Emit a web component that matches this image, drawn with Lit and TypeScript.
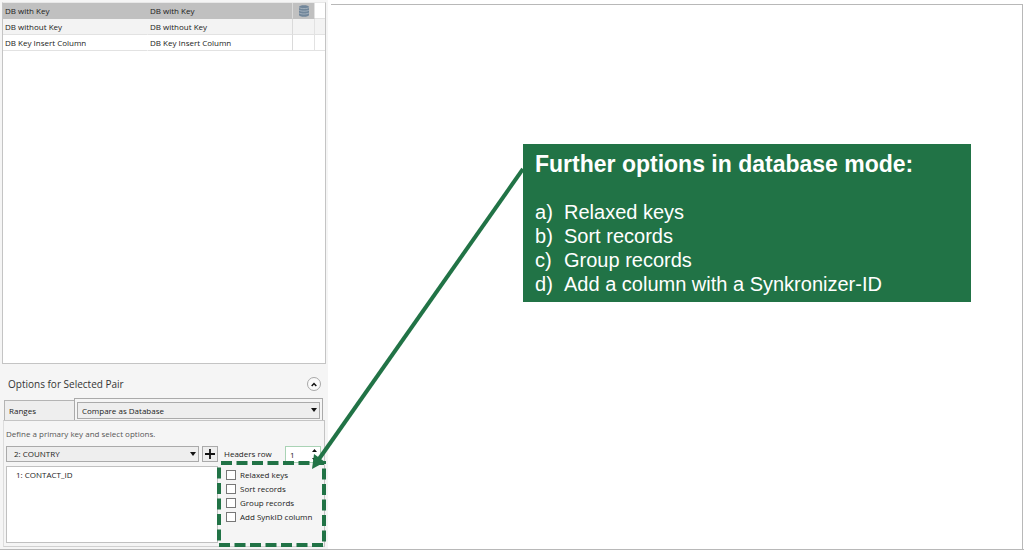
import { LitElement, html, css, svg } from "lit";
import { customElement, state } from "lit/decorators.js";

const caret = svg`<path d="M0 0h6l-3 4z" fill="#111" />`;

@customElement("pair-list")
export class PairList extends LitElement {
  static styles = css`
    :host { display: block; background: #fff; border: 1px solid #c4c4c4; border-top-color: #e8e8e8; box-sizing: border-box; }
    .pairs { width: 100%; table-layout: fixed; border-collapse: separate; border-spacing: 0; }
    .pairs td { height: 16px; box-sizing: border-box; padding: 1px 0 0 2px; line-height: 14px; border-right: 1px solid #e2e2e2; border-bottom: 1px solid #e2e2e2; white-space: nowrap; overflow: hidden; }
    .pairs td.name { border-right-color: transparent; }
    .pairs td.second { border-right-color: #dadada; }
    .pairs tr.alt td { background: #f3f3f3; }
    .pairs tr.selected td { background: #c0c0c0; border-bottom-color: #c0c0c0; }
    .pairs tr.selected td.rest { background: #fff; border-bottom-color: #e2e2e2; }
    .pairs td.rest { border-right: 0; }
    .pairs td.icon { padding: 0; text-align: center; }
    .wide { width: 145px; }
    .mark { width: 22px; }
    .db { display: block; margin: 0 auto; }
  `;
  rows = ["DB with Key", "DB without Key", "DB Key Insert Column"];
  render() {
    return html`<table class="pairs">
      <colgroup><col class="wide" /><col class="wide" /><col class="mark" /><col /></colgroup>
      <tbody>
        ${this.rows.map((r, i) => html`<tr class=${i === 0 ? "selected" : i === 1 ? "alt" : ""}>
          <td class="name">${r}</td><td class="second">${r}</td>
          <td class="icon">${i === 0 ? html`<svg class="db" width="10" height="12" viewBox="0 0 10 12" aria-label="Database">
            <path d="M0 2c0-2.400 10-2.400 10 0v8c0 2.400-10 2.400-10 0z" fill="#71869a" />
            <path d="M0 2.400c1 1.600 9 1.600 10 0M0 5c1 1.600 9 1.600 10 0M0 7.800c1 1.600 9 1.600 10 0" fill="none" stroke="#aebac4" stroke-width=".8" />
          </svg>` : ""}</td><td class="rest"></td>
        </tr>`)}
      </tbody>
    </table>`;
  }
}

@customElement("app-root")
export class AppRoot extends LitElement {
  static styles = css`
    :host { display: grid; grid-template-columns: 328px 1fr; position: relative; min-height: 100vh; box-sizing: border-box; border-bottom: 1px solid #b8b8b8; background: #fff; color: #222; font: 8px/12px "Open Sans", "Noto Sans", sans-serif; overflow: hidden; }
    * { box-sizing: border-box; }
    button, input, select { font: inherit; color: inherit; margin: 0; border-radius: 0; appearance: none; }
    .side { background: #f5f5f5; padding: 2px 2px 0; display: flex; flex-direction: column; }
    pair-list { height: 362px; color: #222; }
    .head { display: flex; align-items: center; justify-content: space-between; height: 34px; padding: 6px 5px 0 6px; }
    .title { margin: 0; font-size: 10px; line-height: 14px; font-weight: 400; color: #333; }
    .collapse { width: 14px; height: 14px; padding: 0; border: 1px solid #a8a8a8; border-radius: 50%; background: #fafafa; display: grid; place-items: center; }
    .tabs { display: flex; align-items: flex-end; padding: 0 3px 0 2px; }
    .tab { width: 70px; height: 20px; padding: 0 0 0 4px; text-align: left; background: #eee; border: 1px solid #b4b4b4; border-right: 0; border-bottom: 0; }
    .active { flex: 1; height: 22px; padding: 3px 2px 1px; border: 1px solid #aaa; border-bottom: 0; }
    .combo { position: relative; display: block; }
    .combo select { display: block; width: 100%; height: 17px; padding: 0 4px; background: #eee; border: 1px solid #aaa; outline: 0; }
    .combo .key { height: 16px; padding-left: 7px; }
    .combo svg { position: absolute; right: 3px; top: 6px; pointer-events: none; }
    .pane { flex: 1; border: 1px solid #c4c4c4; border-left-color: #ddd; border-bottom-color: #d0d0d0; margin: 0 1px 2px; padding: 7px 3px 3px 2px; display: flex; flex-direction: column; }
    .hint { margin: 0; color: #555; }
    .keys { display: grid; grid-template-columns: 193px 16px 1fr 36px; column-gap: 3px; align-items: center; margin-top: 5px; height: 18px; }
    .add { width: 16px; height: 16px; padding: 0; background: #eee; border: 1px solid #aaa; display: grid; place-items: center; }
    .headers { padding-left: 3px; white-space: nowrap; }
    .spin { position: relative; }
    .spin input { width: 100%; height: 17px; padding: 0 4px; border: 1px solid #a9d3b5; background: #fff; outline: 0; display: block; appearance: textfield; }
    .spin input::-webkit-inner-spin-button { appearance: none; }
    .spin svg { position: absolute; right: 4px; top: 3px; }
    .detail { flex: 1; display: grid; grid-template-columns: 212px 1fr; margin-top: 3px; }
    .chosen { list-style: none; margin: 0; padding: 2px 9px; background: #fff; border: 1px solid #c0c0c0; }
    .checks { display: flex; flex-direction: column; padding: 2px 0 0 8px; }
    .check { display: flex; align-items: center; gap: 4px; height: 14px; white-space: nowrap; }
    .check input { width: 10px; height: 10px; border: 1px solid #777; background: #fff; flex: none; }
    .check input:checked { background: #217346; }
    .canvas { margin: 4px 1px 0 3px; border-top: 1px solid #b8b8b8; border-right: 1px solid #b8b8b8; padding: 139px 51px 0 192px; }
    .callout { background: #217346; color: #fff; padding: 8px 12px 6px; font: 20px/24px "Liberation Sans", Arial, sans-serif; }
    .callout h2 { margin: 0 0 24px; font-size: 23px; line-height: 24px; font-weight: 700; white-space: nowrap; }
    .callout ol { margin: 0; padding: 0; list-style: none; }
    .callout li { display: grid; grid-template-columns: 29px 1fr; }
    .overlay { position: absolute; left: 0; top: 0; pointer-events: none; }
  `;
  @state() opts = ["Relaxed keys", "Sort records", "Group records", "Add SynkID column"];
  points = ["Relaxed keys", "Sort records", "Group records", "Add a column with a Synkronizer-ID"];
  render() {
    return html`
      <aside class="side">
        <pair-list></pair-list>
        <div class="head">
          <h1 class="title">Options for Selected Pair</h1>
          <button class="collapse" aria-label="Collapse options"><svg width="6" height="5" viewBox="0 0 6 5"><path d="M.7 4L3 1.500 5.300 4" fill="none" stroke="#111" stroke-width="1.5" /></svg></button>
        </div>
        <div class="tabs">
          <button class="tab">Ranges</button>
          <div class="active"><label class="combo"><select aria-label="Comparison mode"><option>Compare as Database</option></select><svg width="6" height="4">${caret}</svg></label></div>
        </div>
        <section class="pane">
          <p class="hint">Define a primary key and select options.</p>
          <div class="keys">
            <label class="combo"><select class="key" aria-label="Primary key"><option>2: COUNTRY</option></select><svg width="6" height="4">${caret}</svg></label>
            <button class="add" aria-label="Add key"><svg width="10" height="10" viewBox="0 0 10 10"><path d="M5 0v10M0 5h10" stroke="#111" stroke-width="1.8" /></svg></button>
            <label class="headers" for="headers">Headers row</label>
            <div class="spin"><input id="headers" type="number" value="1" /><svg width="5" height="12" viewBox="0 0 5 12"><path d="M0 3l2.500-3L5 3zM0 9h5l-2.500 3z" fill="#111" /></svg></div>
          </div>
          <div class="detail">
            <ul class="chosen"><li>1: CONTACT_ID</li></ul>
            <div class="checks">${this.opts.map((o) => html`<label class="check"><input type="checkbox" />${o}</label>`)}</div>
          </div>
        </section>
      </aside>
      <main class="canvas">
        <section class="callout">
          <h2>Further options in database mode:</h2>
          <ol>${this.points.map((p, i) => html`<li><span>${"abcd"[i]})</span><span>${p}</span></li>`)}</ol>
        </section>
      </main>
      <svg class="overlay" width="524" height="549" viewBox="0 0 524 549" aria-hidden="true">
        <path d="M523 169L319 459" stroke="#217346" stroke-width="4" />
        <path d="M312 469L314 454L325 462z" fill="#217346" />
        <rect x="219" y="463" width="105" height="82" fill="none" stroke="#217346" stroke-width="4" stroke-dasharray="11 4.500" stroke-dashoffset="-2" />
      </svg>`;
  }
}
